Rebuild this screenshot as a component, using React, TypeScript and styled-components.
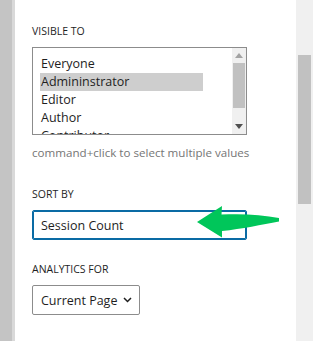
import React, { FC } from 'react';
import styled, { createGlobalStyle } from 'styled-components';

const GlobalStyle = createGlobalStyle`
  html, body {
    margin: 0;
    padding: 0;
    background: #ffffff;
  }
  body {
    font-family: "Open Sans", "Noto Sans", sans-serif;
    color: #1e1e1e;
  }
`;

const Screen = styled.div`
  display: flex;
  width: 313px;
  height: 341px;
  overflow: hidden;
  position: relative;
`;

const EdgeStrip = styled.div`
  width: 12px;
  flex-shrink: 0;
  background: #c4c4c4;
  border-right: 3px solid #d9d9d9;
`;

const Panel = styled.div`
  flex: 1;
  padding: 23px 0 0 17px;
  display: flex;
  flex-direction: column;
  align-items: flex-start;
`;

const Label = styled.div<{ $gap: number }>`
  margin-top: ${(p) => p.$gap}px;
  font-size: 10.5px;
  line-height: 16px;
  font-weight: 500;
  text-transform: uppercase;
  color: #1e1e1e;
  margin-bottom: 8px;
`;

const ListBox = styled.div`
  width: 213px;
  height: 86px;
  border: 1px solid #8c8c8c;
  display: flex;
  overflow: hidden;
`;

const OptionList = styled.div`
  flex: 1;
  padding: 7px 0 0 7px;
`;

const Option = styled.div<{ $selected?: boolean }>`
  width: 162px;
  height: 18px;
  padding-left: 1px;
  font-size: 12.5px;
  line-height: 18px;
  background: ${(p) => (p.$selected ? '#cecece' : 'transparent')};
`;

const ListScroll = styled.div`
  width: 14px;
  background: #f0f0f0;
  display: flex;
  flex-direction: column;
  align-items: center;
`;

const ArrowBtn = styled.div`
  height: 15px;
  display: flex;
  align-items: center;
  justify-content: center;
`;

const ListThumb = styled.div`
  width: 12px;
  height: 45px;
  background: #c1c1c1;
`;

const ListGap = styled.div`
  flex: 1;
`;

const Help = styled.div`
  margin-top: 9px;
  font-size: 11.6px;
  line-height: 18px;
  color: #757575;
`;

const Select = styled.div<{ $focused?: boolean; $width: number }>`
  box-sizing: border-box;
  width: ${(p) => p.$width}px;
  height: 30px;
  border: 1px solid ${(p) => (p.$focused ? '#0a6ba4' : '#8c8c8c')};
  box-shadow: ${(p) => (p.$focused ? 'inset 0 0 0 1px #0a6ba4' : 'none')};
  border-radius: 2px;
  display: flex;
  align-items: center;
  justify-content: space-between;
  padding: 0 7px 0 8px;
  font-size: 12.5px;
  color: #1e1e1e;
`;

const Scrollbar = styled.div`
  width: 17px;
  flex-shrink: 0;
  background: #f0f0f0;
  padding-top: 55px;
  box-sizing: border-box;
`;

const Thumb = styled.div`
  width: 13px;
  margin-left: 2px;
  height: 149px;
  background: #c1c1c1;
`;

const Pointer = styled.svg`
  position: absolute;
  left: 0;
  top: 0;
  pointer-events: none;
`;

const Tri: FC<{ up?: boolean; color: string }> = ({ up, color }) => (
  <svg width="8" height="5" viewBox="0 0 8 5">
    <path d={up ? 'M0 5 L4 0 L8 5 Z' : 'M0 0 L8 0 L4 5 Z'} fill={color} />
  </svg>
);

const Chevron: FC = () => (
  <svg width="9" height="6" viewBox="0 0 9 6">
    <path d="M1 1 L4.5 4.5 L8 1" fill="none" stroke="#1e1e1e" strokeWidth="1.5" />
  </svg>
);

const roles = ['Everyone', 'Admininstrator', 'Editor', 'Author', 'Contributor'];

const App: FC = () => (
  <>
    <GlobalStyle />
    <Screen>
      <EdgeStrip />
      <Panel>
        <Label $gap={0}>Visible to</Label>
        <ListBox>
          <OptionList>
            {roles.map((r) => (
              <Option key={r} $selected={r === 'Admininstrator'}>
                {r}
              </Option>
            ))}
          </OptionList>
          <ListScroll>
            <ArrowBtn>
              <Tri up color="#a3a3a3" />
            </ArrowBtn>
            <ListThumb />
            <ListGap />
            <ArrowBtn>
              <Tri color="#505050" />
            </ArrowBtn>
          </ListScroll>
        </ListBox>
        <Help>command+click to select multiple values</Help>
        <Label $gap={24}>Sort by</Label>
        <Select $focused $width={215}>
          Session Count
          <Chevron />
        </Select>
        <Label $gap={21}>Analytics for</Label>
        <Select $width={108}>
          Current Page
          <Chevron />
        </Select>
      </Panel>
      <Scrollbar>
        <Thumb />
      </Scrollbar>
      <Pointer width="313" height="341" viewBox="0 0 313 341">
        <path
          d="M197 222 L222 206 L221.5 214.5 C242 213.5 262 214.5 279 218 L279 221.5 C262 224.5 242 229 222 231 L222 237.5 Z"
          fill="#00c65a"
        />
      </Pointer>
    </Screen>
  </>
);

export default App;
